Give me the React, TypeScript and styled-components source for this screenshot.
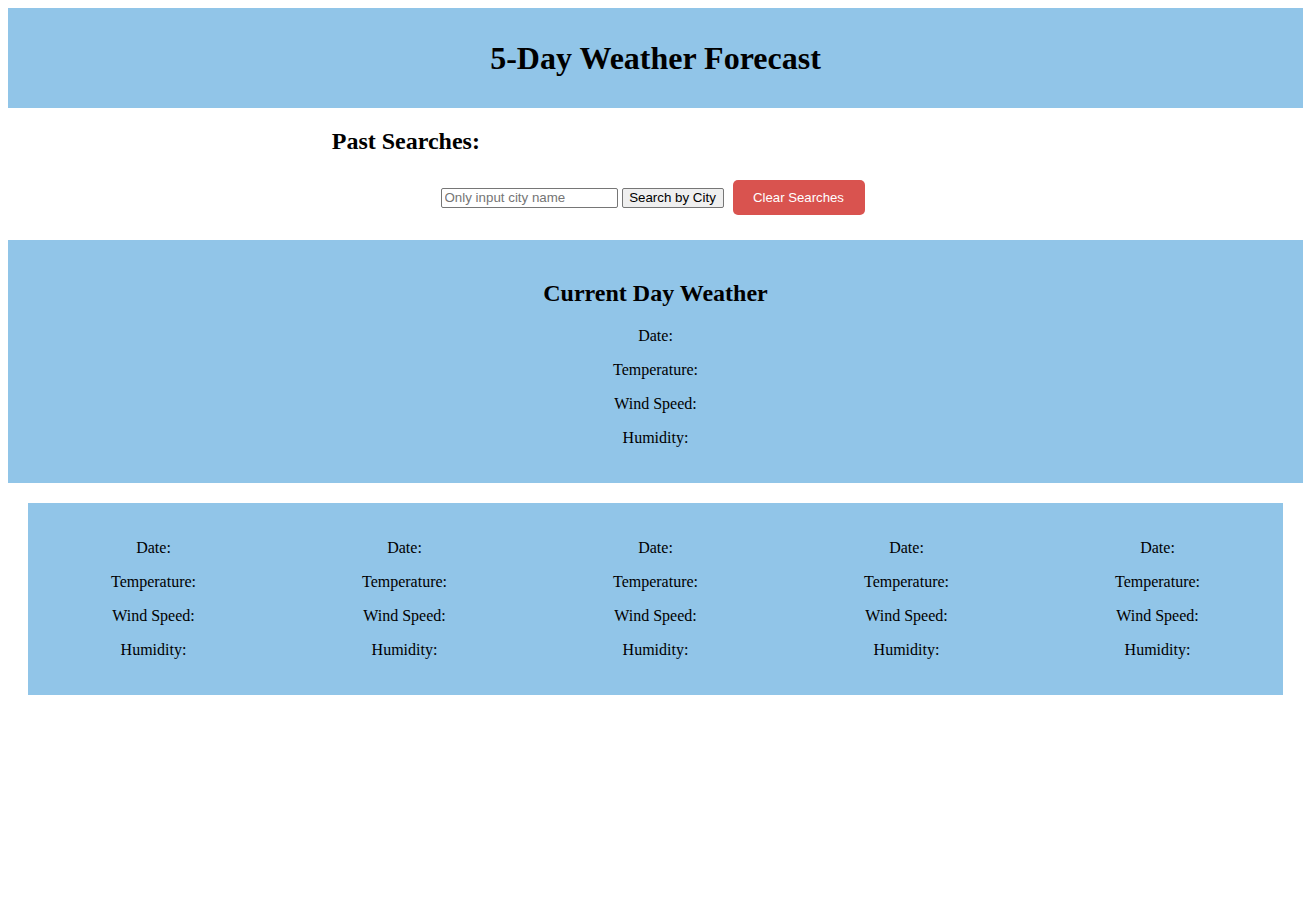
import React from "react";
import styled, { createGlobalStyle } from "styled-components";

const GlobalStyle = createGlobalStyle`
  body {
    margin: 8px;
    font-family: "Liberation Serif", "Times New Roman", serif;
    background: #ffffff;
    color: #000000;
  }
`;

const Header = styled.header`
  background: #91c5e8;
  padding: 11px 0 9px;
  text-align: center;
`;

const Title = styled.h1`
  font-size: 32px;
  font-weight: bold;
  margin: 21.44px 0;
`;

const SearchArea = styled.section`
  width: 50%;
  margin: 0 auto;
`;

const SectionHeading = styled.h2`
  font-size: 24px;
  font-weight: bold;
  margin: 19.92px 0;
`;

const SearchRow = styled.div`
  display: flex;
  justify-content: center;
  align-items: center;
  margin: 25.5px 0 25px;
  padding-right: 6px;
  font-family: "Liberation Sans", Arial, sans-serif;
`;

const CityInput = styled.input`
  box-sizing: border-box;
  width: 177px;
  height: 20px;
  padding: 1px 3px;
  border: 1px solid #767676;
  border-radius: 2px;
  font-family: "Liberation Sans", Arial, sans-serif;
  font-size: 13.33px;
  &::placeholder {
    color: #757575;
  }
`;

const SearchButton = styled.button`
  box-sizing: border-box;
  height: 20px;
  width: 102px;
  margin-left: 4px;
  padding: 0 6px;
  border: 1px solid #767676;
  border-radius: 2px;
  background: #efefef;
  color: #000;
  font-family: "Liberation Sans", Arial, sans-serif;
  font-size: 13.33px;
`;

const ClearButton = styled.button`
  box-sizing: border-box;
  height: 35px;
  width: 132px;
  margin-left: 9px;
  border: none;
  border-radius: 5px;
  background: #d9534f;
  color: #ffffff;
  font-family: "Liberation Sans", Arial, sans-serif;
  font-size: 13.2px;
`;

const CurrentPanel = styled.section`
  background: #91c5e8;
  padding: 20px 0;
  text-align: center;
`;

const Line = styled.p`
  font-size: 16px;
  line-height: 18px;
  margin: 16px 0;
`;

const ForecastPanel = styled.section`
  background: #91c5e8;
  margin: 20px 20px 0;
  padding: 20px 0;
  display: grid;
  grid-template-columns: repeat(5, 1fr);
  text-align: center;
`;

const DayColumn = styled.div``;

const fields = ["Date:", "Temperature:", "Wind Speed:", "Humidity:"];

export default function App() {
  return (
    <>
      <GlobalStyle />
      <Header>
        <Title>5-Day Weather Forecast</Title>
      </Header>
      <SearchArea>
        <SectionHeading>Past Searches:</SectionHeading>
        <SearchRow>
          <CityInput type="text" placeholder="Only input city name" />
          <SearchButton>Search by City</SearchButton>
          <ClearButton>Clear Searches</ClearButton>
        </SearchRow>
      </SearchArea>
      <CurrentPanel>
        <SectionHeading>Current Day Weather</SectionHeading>
        {fields.map((f) => (
          <Line key={f}>{f}</Line>
        ))}
      </CurrentPanel>
      <ForecastPanel>
        {[0, 1, 2, 3, 4].map((d) => (
          <DayColumn key={d}>
            {fields.map((f) => (
              <Line key={f}>{f}</Line>
            ))}
          </DayColumn>
        ))}
      </ForecastPanel>
    </>
  );
}
